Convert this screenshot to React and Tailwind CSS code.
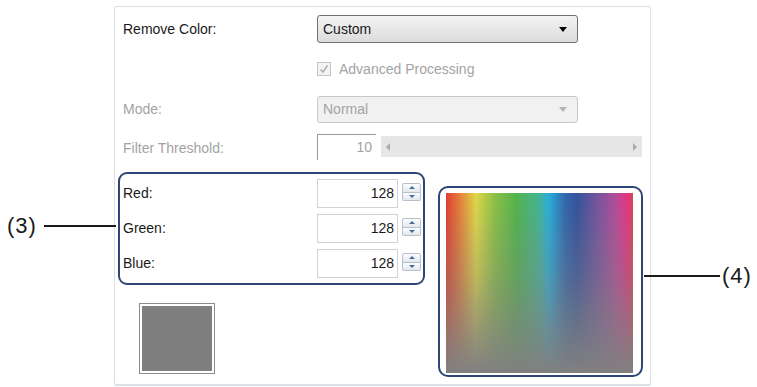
const spectrum =
    'bg-[linear-gradient(to_bottom,rgba(128,128,128,0.08)_0%,rgba(128,128,128,0.4)_45%,rgba(128,128,128,1)_100%),linear-gradient(to_right,#e8382a_0%,#ef7a32_7%,#e9e043_16%,#8cc63f_26%,#4cb848_38%,#3fb89a_50%,#1fb2e3_55%,#2a62b0_64%,#2d4e9e_70%,#7a4fa0_82%,#b9479a_91%,#e8308a_96%,#e53a52_100%)]';

const Spinner = () => (
    <div className="flex flex-col w-[19px] h-[18px] mt-[4px] ml-[4px]">
        <div className="flex-1 flex items-center justify-center border border-[#b8c0cc] bg-gradient-to-b from-[#fbfcfd] to-[#e3e8ee] rounded-t-[2px]">
            <div className="w-0 h-0 border-l-[3px] border-r-[3px] border-b-[3px] border-l-transparent border-r-transparent border-b-[#4a6a9a]" />
        </div>
        <div className="flex-1 flex items-center justify-center border border-t-0 border-[#b8c0cc] bg-gradient-to-b from-[#fbfcfd] to-[#e3e8ee] rounded-b-[2px]">
            <div className="w-0 h-0 border-l-[3px] border-r-[3px] border-t-[3px] border-l-transparent border-r-transparent border-t-[#4a6a9a]" />
        </div>
    </div>
);

const ColorRow = ({label}) => (
    <div className="flex h-[29px] items-center">
        <span className="w-[197px] pl-[3px] text-[#1a1a1a]">{label}</span>
        <div className="w-[81px] h-[29px] border border-[#cfd3d8] bg-white flex items-center justify-end pr-[3px] text-[#1a1a1a]">128</div>
        <div className="self-start">
            <Spinner />
        </div>
    </div>
);

const App = () => (
    <div className="relative w-[757px] h-[387px] bg-white font-['Liberation_Sans',Arial,sans-serif] text-[14px] overflow-hidden">
        <div className="ml-[114px] mt-[6px] w-[537px] h-[379px] border border-[#dbe1e8] rounded-[2px] shadow-[0_1px_1px_#d8dde3]">
            <div className="pl-[8px] pt-[8px]">
                <div className="flex items-center h-[28px]">
                    <span className="w-[194px] text-[#1a1a1a]">Remove Color:</span>
                    <div className="w-[261px] h-[28px] border border-[#707070] rounded-[3px] bg-gradient-to-b from-[#f3f3f3] to-[#dcdcdc] flex items-center justify-between pl-[5px] pr-[10px] text-[#1a1a1a]">
                        <span>Custom</span>
                        <div className="w-0 h-0 border-l-[4px] border-r-[4px] border-t-[5px] border-l-transparent border-r-transparent border-t-black" />
                    </div>
                </div>
                <div className="flex items-center h-[18px] mt-[17px]">
                    <span className="w-[194px]" />
                    <div className="w-[14px] h-[14px] border border-[#c4c4c4] bg-[#f4f4f4] flex items-center justify-center">
                        <svg width="10" height="10" viewBox="0 0 10 10">
                            <path d="M1.5 5.5 L4 8 L8.5 1.5" fill="none" stroke="#b0b0b0" strokeWidth="1.6" />
                        </svg>
                    </div>
                    <span className="ml-[8px] text-[#a3a3a3]">Advanced Processing</span>
                </div>
                <div className="flex items-center h-[27px] mt-[18px]">
                    <span className="w-[194px] text-[#a3a3a3]">Mode:</span>
                    <div className="w-[261px] h-[27px] border border-[#c9c9c9] rounded-[3px] bg-[#f1f1f1] flex items-center justify-between pl-[5px] pr-[10px] text-[#a3a3a3]">
                        <span>Normal</span>
                        <div className="w-0 h-0 border-l-[4px] border-r-[4px] border-t-[5px] border-l-transparent border-r-transparent border-t-[#b5b5b5]" />
                    </div>
                </div>
                <div className="flex items-start h-[24px] mt-[11px]">
                    <span className="w-[194px] mt-[4px] text-[#a3a3a3]">Filter Threshold:</span>
                    <div className="w-[59px] h-[26px] border-t border-l border-[#9a9a9a] flex items-center justify-end pr-[4px] text-[#a3a3a3]">10</div>
                    <div className="ml-[5px] mt-[2px] w-[261px] h-[21px] bg-[#e6e6e6] flex items-center justify-between px-[5px]">
                        <div className="w-0 h-0 border-t-[4px] border-b-[4px] border-r-[4px] border-t-transparent border-b-transparent border-r-[#a8a8a8]" />
                        <div className="w-0 h-0 border-t-[4px] border-b-[4px] border-l-[4px] border-t-transparent border-b-transparent border-l-[#a8a8a8]" />
                    </div>
                </div>
            </div>
            <div className="flex ml-[3px] mt-[14px]">
                <div className="flex flex-col">
                    <div className="w-[307px] h-[113px] border-2 border-[#2d4677] rounded-[9px] pt-[5px] flex flex-col gap-[6px]">
                        <ColorRow label="Red:" />
                        <ColorRow label="Green:" />
                        <ColorRow label="Blue:" />
                    </div>
                    <div className="ml-[21px] mt-[18px] w-[76px] h-[71px] border border-[#8c8c8c] bg-white p-[2px]">
                        <div className="w-full h-full bg-[#7f7f80]" />
                    </div>
                </div>
                <div className="ml-[13px] mt-[14px] w-[205px] h-[191px] border-2 border-[#2d4677] rounded-[10px] pl-[6px] pt-[5px]">
                    <div className={`w-[187px] h-[180px] ${spectrum}`} />
                </div>
            </div>
        </div>

        <div className="absolute left-[7px] top-[215px] flex items-center">
            <span className="text-[22px] tracking-[1px] text-[#1a1a1a] leading-none">(3)</span>
            <div className="ml-[7px] w-[72px] h-[2px] bg-[#1a1a1a]" />
        </div>
        <div className="absolute left-[644px] top-[265px] flex items-center">
            <div className="w-[76px] h-[2px] bg-[#1a1a1a]" />
            <span className="ml-[2px] text-[22px] tracking-[1px] text-[#1a1a1a] leading-none">(4)</span>
        </div>
    </div>
);

export default App;
